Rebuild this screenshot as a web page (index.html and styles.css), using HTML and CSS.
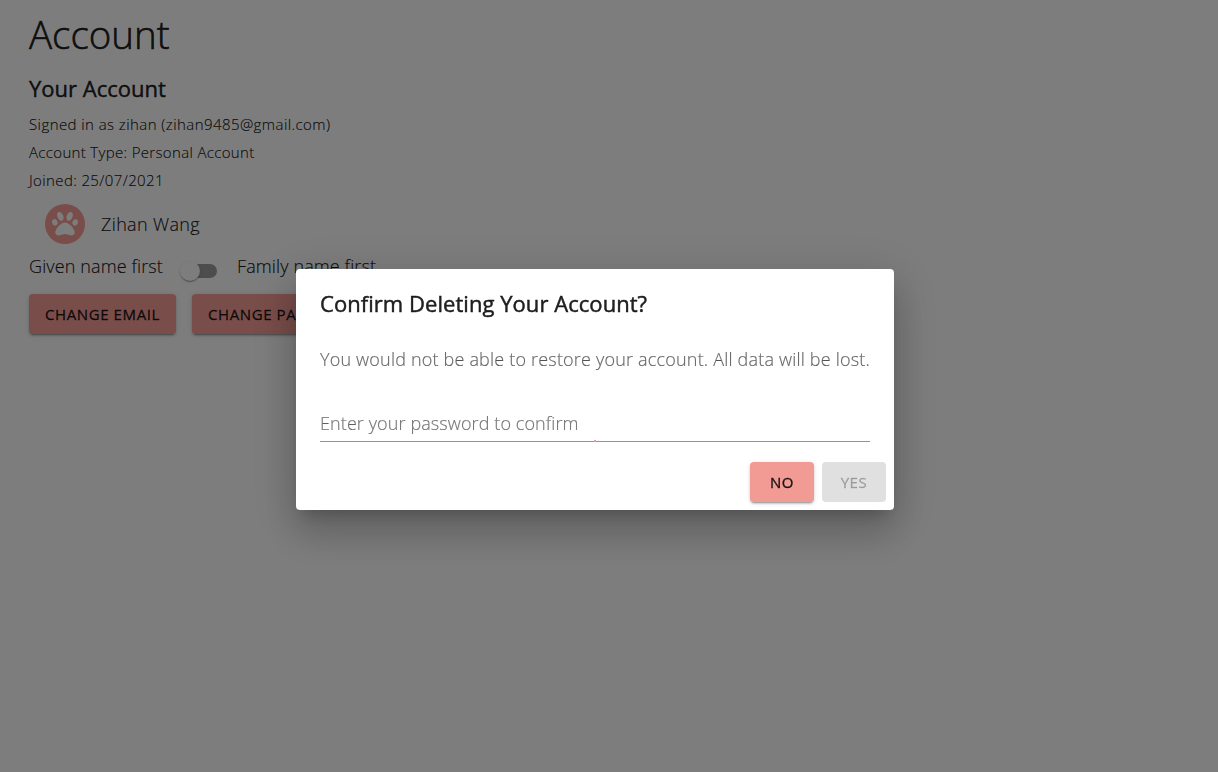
FILE: index.html
```html
<!DOCTYPE html>
<html lang="en">
<head>
<meta charset="utf-8">
<title>Account</title>
<link rel="stylesheet" href="styles.css">
</head>
<body>
<main class="page">
  <h1 class="title">Account</h1>
  <h2 class="subtitle">Your Account</h2>
  <p class="info email">Signed in as zihan (zihan9485@gmail.com)</p>
  <p class="info type">Account Type: Personal Account</p>
  <p class="info joined">Joined: 25/07/2021</p>
  <div class="profile">
    <div class="avatar">
      <svg viewBox="0 0 512 512" width="26" height="26"><path fill="#fafafa" d="M256 224c-79.41 0-192 122.76-192 200.25 0 34.9 26.81 55.75 71.74 55.75 48.84 0 81.09-25.08 120.26-25.08 39.51 0 71.85 25.08 120.26 25.08 44.93 0 71.74-20.85 71.74-55.75C448 346.76 335.41 224 256 224zm-147.28-12.61c-10.4-34.65-42.44-57.09-71.56-50.13-29.12 6.96-44.29 40.69-33.89 75.34 10.4 34.65 42.44 57.09 71.56 50.13 29.12-6.96 44.29-40.69 33.89-75.34zm84.72-20.78c30.94-8.14 42.93-53.11 26.79-100.44s-54.31-79.12-85.25-70.98c-30.94 8.14-42.93 53.11-26.79 100.44s54.31 79.13 85.25 70.98zm281.39-29.34c-29.12-6.96-61.15 15.48-71.56 50.13-10.4 34.65 4.77 68.38 33.89 75.34 29.12 6.96 61.15-15.48 71.56-50.13 10.4-34.65-4.77-68.38-33.89-75.34zm-156.27 29.34c30.94 8.14 69.11-23.64 85.25-70.98 16.14-47.33 4.15-92.3-26.79-100.44-30.94-8.14-69.11 23.64-85.25 70.98-16.14 47.33-4.15 92.3 26.79 100.44z"/></svg>
    </div>
    <span class="name">Zihan Wang</span>
  </div>
  <div class="order">
    <span class="given">Given name first</span>
    <span class="switch"><span class="thumb"></span></span>
    <span class="family">Family name first</span>
  </div>
  <div class="buttons">
    <button class="btn">CHANGE EMAIL</button>
    <button class="btn">CHANGE PASSWORD</button>
  </div>
</main>
<div class="backdrop">
  <section class="dialog" role="dialog">
    <h2 class="dialog-title">Confirm Deleting Your Account?</h2>
    <p class="dialog-text">You would not be able to restore your account. All data will be lost.</p>
    <div class="field"><span class="label">Enter your password to confirm</span></div>
    <div class="actions">
      <button class="btn">NO</button>
      <button class="btn disabled" disabled>YES</button>
    </div>
  </section>
</div>
</body>
</html>
```
FILE: styles.css
```css
* { box-sizing: border-box; }
body {
  margin: 0;
  background: #fafafa;
  color: rgba(0, 0, 0, 0.87);
  font-family: "Open Sans", "Noto Sans", sans-serif;
  font-weight: 300;
  -webkit-text-stroke: 0.2px;
}
h1, h2, p { margin: 0; white-space: nowrap; }
.page { height: 772px; padding: 8px 29px; overflow: hidden; }
.title { font-size: 38.5px; line-height: 52px; font-weight: 300; -webkit-text-stroke: 0.6px; }
.subtitle { margin-top: 10px; font-size: 22px; line-height: 36px; font-weight: 400; -webkit-text-stroke: 0.45px; }
.info { font-size: 15px; line-height: 28px; }
.subtitle + .info { margin-top: 4px; }
.email { letter-spacing: 0.43px; }
.type { letter-spacing: 0.33px; }
.joined { letter-spacing: 0.38px; }
.profile { display: flex; align-items: center; gap: 16px; height: 60px; padding-left: 16px; font-size: 18px; letter-spacing: 0.35px; }
.avatar { display: flex; align-items: center; justify-content: center; width: 40px; height: 40px; border-radius: 50%; background: #f29a94; }
.order { display: flex; align-items: center; height: 24px; font-size: 18px; letter-spacing: 0.12px; }
.switch { width: 34px; height: 14px; margin: 9px 20px 0; border-radius: 7px; background: #9b9b9b; }
.thumb { display: block; width: 20px; height: 20px; margin: -3px 0 0 -3px; border-radius: 50%; background: #fafafa; box-shadow: 0 2px 1px -1px rgba(0,0,0,.2), 0 1px 1px rgba(0,0,0,.14), 0 1px 3px rgba(0,0,0,.12); }
.buttons { display: flex; gap: 16px; margin-top: 16px; }
.btn {
  height: 40px; min-width: 64px; padding: 0 16px; border: 0; border-radius: 4px;
  background: #f29a94; color: rgba(0, 0, 0, 0.87);
  font: 400 15px/40px "Open Sans", "Noto Sans", sans-serif;
  letter-spacing: 0.6px;
  white-space: nowrap;
  -webkit-text-stroke: 0.3px;
  box-shadow: 0 3px 1px -2px rgba(0,0,0,.2), 0 2px 2px rgba(0,0,0,.14), 0 1px 5px rgba(0,0,0,.12);
}
.disabled { background: #e0e0e0; color: rgba(0, 0, 0, 0.26); box-shadow: none; }
.backdrop { position: fixed; inset: 0; display: flex; align-items: flex-start; justify-content: center; padding-top: 269px; padding-right: 28px; background: rgba(0, 0, 0, 0.5); }
.dialog {
  width: 598px; height: 241px; border-radius: 4px; background: #fff;
  box-shadow: 0 11px 15px -7px rgba(0,0,0,.2), 0 24px 38px 3px rgba(0,0,0,.14), 0 9px 46px 8px rgba(0,0,0,.12);
}
.dialog-title { padding: 15px 24px 17px; font-size: 22px; line-height: 38px; font-weight: 400; letter-spacing: 0.05px; -webkit-text-stroke: 0.45px; }
.dialog-text { padding: 6px 24px 0; font-size: 18px; line-height: 28px; letter-spacing: 0.19px; color: rgba(0, 0, 0, 0.56); }
.field { position: relative; height: 33px; margin: 36px 24px 0; border-bottom: 1px solid #949494; font-size: 18px; line-height: 28px; letter-spacing: 0.1px; color: rgba(0, 0, 0, 0.5); white-space: nowrap; }
.field::after { content: ""; position: absolute; left: calc(50% - 1px); bottom: -1px; width: 2px; height: 2px; background: #f29a94; }
.actions { display: flex; justify-content: flex-end; gap: 8px; padding: 20px 8px 8px; }
```
